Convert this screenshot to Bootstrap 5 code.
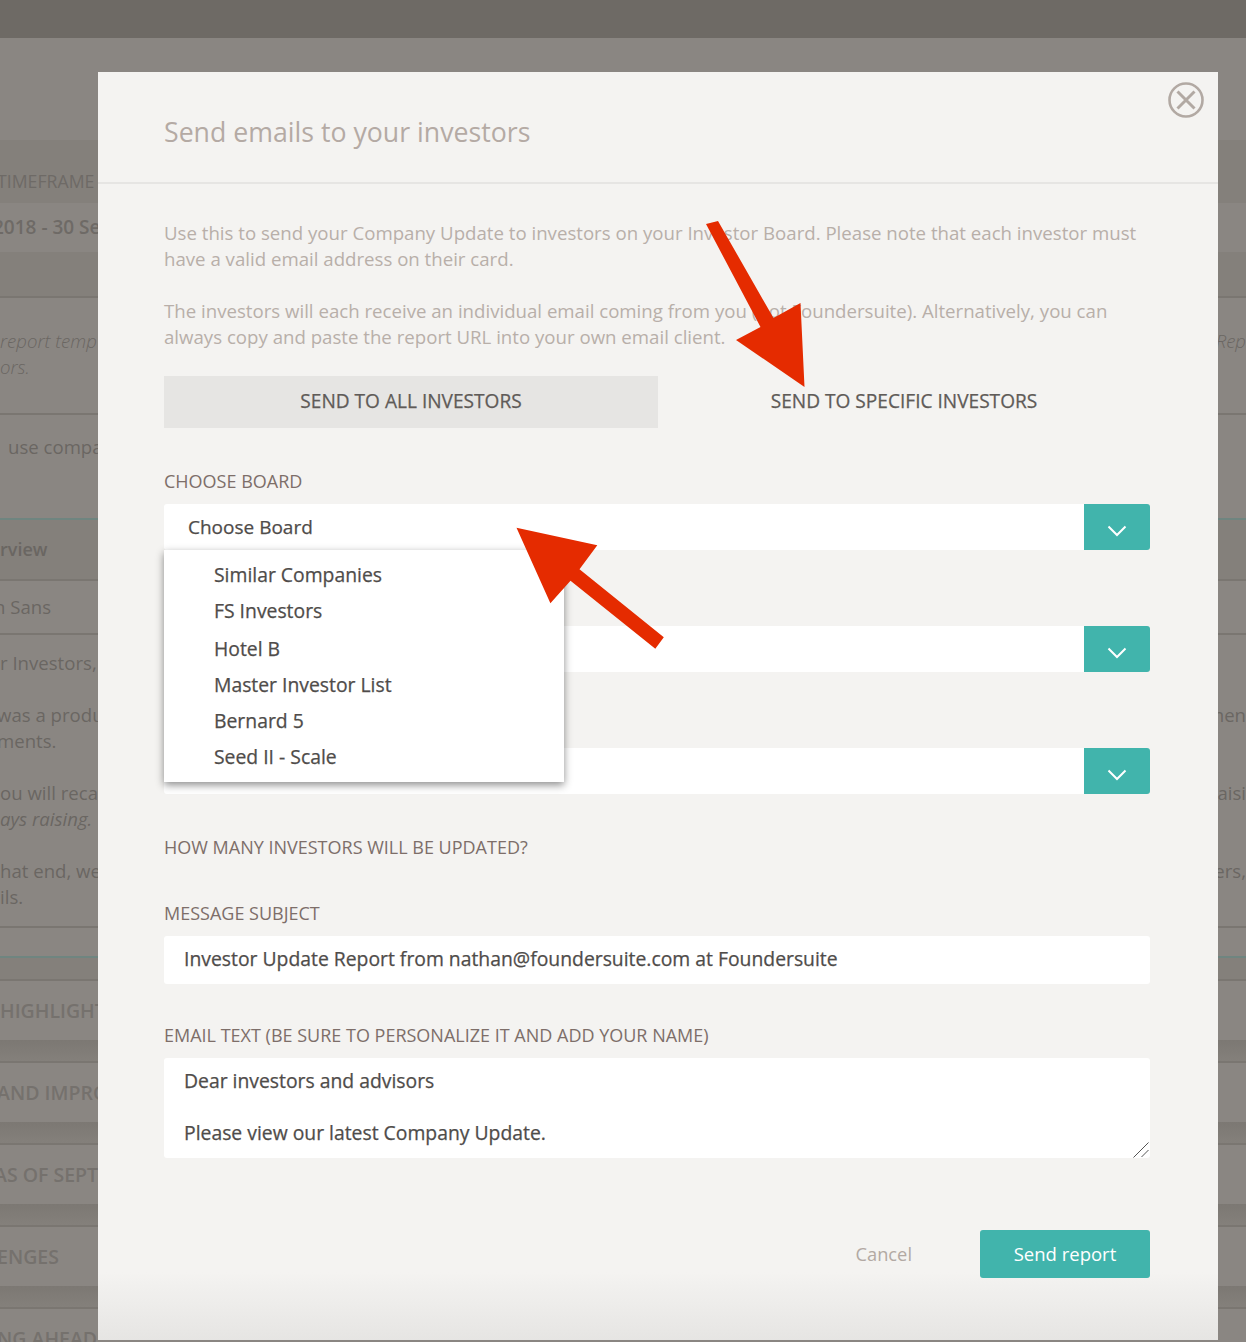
<!DOCTYPE html>
<html>
<head>
  <title>Send emails to your investors</title>
  <link href="https://cdn.jsdelivr.net/npm/bootstrap@5.3.0/dist/css/bootstrap.min.css" rel="stylesheet">
  <style>
    body { background: #8a8682; font-family: "Open Sans", sans-serif; font-size: 18px; overflow: hidden; height: 1342px; position: relative; }
    /* page behind the modal */
    .bg-top { height: 38px; background: #6e6a65; }
    .bg-gap { height: 102px; }
    .bg-row { display: flex; justify-content: space-between; white-space: nowrap; color: #6a6662; font-size: 18.6px; line-height: 26px; overflow: hidden; }
    .bg-band { background: #84807b; }
    .bg-dark { background: linear-gradient(#8a8682 59px, #7c7873 59px, #84807b 80px); }
    .bg-line { border-bottom: 2px solid #7a7671; }
    .bg-teal { border-bottom: 2px solid #6f8580; }
    .h-a { height: 63px; padding-top: 28px; font-size: 17.7px; color: #6e6a66; }
    .h-b { height: 49px; padding-top: 11px; font-size: 19px; font-weight: 600; color: #6e6a66; }
    .h-c { height: 46px; }
    .h-d { height: 117px; padding-top: 30px; font-weight: 300; }
    .h-e { height: 105px; padding-top: 19px; }
    .h-f { height: 61px; padding-top: 16px; font-size: 18px; font-weight: 600; }
    .h-g { height: 54px; padding-top: 13px; }
    .h-h { height: 67px; padding-top: 15px; }
    .h-i { height: 78px; }
    .h-k { height: 70px; }
    .h-l { height: 30px; }
    .h-m { height: 23px; }
    .h-j { height: 82px; padding-top: 17px; font-size: 19.5px; font-weight: 600; color: #75716d; }
    .off-a { margin-left: -3px; }
    .off-b { margin-left: -6px; }
    .off-c { margin-left: -7px; }
    /* modal */
    .sheet { position: absolute; left: 98px; top: 72px; width: 1120px; height: 1268px; background: linear-gradient(#f4f3f1 1200px, #e6e5e3 1268px); border: 0; border-radius: 0; }
    .sheet .modal-header { height: 112px; padding: 10px 68px 0 66px; border-bottom: 2px solid #e6e5e3; border-radius: 0; }
    .sheet .modal-title { font-size: 26.7px; font-weight: 400; color: #b4aaa4; line-height: 36px; }
    .close-x { position: absolute; right: 14px; top: 10px; width: 36px; height: 36px; padding: 0; background: none; border: 0; display: block; }
    .sheet .modal-body { padding: 36px 68px 0 66px; flex: none; }
    .intro { color: #b8afa9; font-size: 18.65px; line-height: 26px; margin-bottom: 26px; }
    .tab-btn { height: 52px; flex: 1 1 0; border: 0; border-radius: 0; font-size: 19.1px; -webkit-text-stroke: .25px; color: #5f5b58; background: none; text-transform: uppercase; padding-top: 4px; }
    .tab-btn.is-on { flex: none; width: 494px; background: #e6e5e3; }
    .fld-label { display: block; color: #7d6e69; font-size: 18px; text-transform: uppercase; line-height: 26px; margin: 0 0 10px; }
    .label-gap { margin-bottom: 40px; }
    .pick-row { height: 46px; background: #fff; border-radius: 3px 0 0 3px; color: #4f4c4a; font-size: 19px; -webkit-text-stroke: .25px; padding-left: 24px; line-height: 46px; }
    .pick-btn { width: 66px; height: 46px; padding-top: 8px; background: #41b4ac; border-radius: 0 3px 3px 0; }
    .pick-gap { margin-bottom: 76px; }
    .pick-last { margin-bottom: 40px; }
    .fld-input { height: 48px; border: 0; border-radius: 3px; padding: 0 20px 3px; font-size: 19.35px; -webkit-text-stroke: .25px; color: #4f4c4a; margin-bottom: 38px; }
    .fld-area { height: 100px; border: 0; border-radius: 3px; padding: 10px 20px; font-size: 19.35px; -webkit-text-stroke: .25px; line-height: 26px; color: #4f4c4a; resize: none; }
    .grip { position: absolute; right: 1px; bottom: 0; }
    .board-menu { position: absolute; left: 66px; top: 478px; width: 400px; height: 232px; border: 0; border-radius: 0; padding: 7px 0 0; margin: 0; display: block; box-shadow: 0 3px 8px rgba(0,0,0,.45); }
    .board-menu .dropdown-item { padding: 0 0 0 50px; font-size: 19.35px; -webkit-text-stroke: .25px; line-height: 36px; color: #4f4c4a; }
    .board-menu .nudge { padding-top: 2px; }
    .sheet .modal-footer { padding: 0 68px 0 66px; border: 0; margin-top: 72px; gap: 68px; justify-content: flex-end; }
    .sheet .modal-footer > * { margin: 0; }
    .link-cancel { color: #b2a9a3; font-size: 18.3px; text-decoration: none; }
    .btn-send { width: 170px; height: 48px; background: #41b4ac; color: #fff; font-size: 18.5px; border: 0; border-radius: 3px; }
    .arrows { position: absolute; left: 0; top: 0; z-index: 1100; pointer-events: none; }
  </style>
</head>
<body>
  <div class="bg-top"></div>
  <div class="bg-gap"></div>
  <div class="bg-band bg-row h-a"><span class="off-a">TIMEFRAME</span></div>
  <div class="bg-row h-b"><span class="off-c">2018 - 30 Sep</span></div>
  <div class="bg-row bg-band h-c bg-line"></div>
  <div class="bg-row h-d bg-line"><div><i>report temp</i><br><i>ors.</i></div><i>Rep</i></div>
  <div class="bg-row h-e bg-teal"><span class="ms-2">use compa</span></div>
  <div class="bg-row bg-band h-f bg-line"><span>rview</span></div>
  <div class="bg-row h-g bg-line"><span class="off-b">n Sans</span></div>
  <div class="bg-row h-h"><span>r Investors,</span></div>
  <div class="bg-row h-i"><div class="off-a">was a produ<br>ments.</div><span>men</span></div>
  <div class="bg-row h-i"><div>ou will reca<br><i>ays raising.</i></div><span>raisi</span></div>
  <div class="bg-row h-k bg-line"><div>hat end, we<br>ils.</div><span>ers,</span></div>
  <div class="bg-row h-l bg-teal"></div>
  <div class="bg-row bg-band h-m bg-line"></div>
  <div class="bg-row bg-dark h-j bg-line"><span>HIGHLIGHT</span></div>
  <div class="bg-row bg-dark h-j bg-line"><span class="off-a">AND IMPRO</span></div>
  <div class="bg-row bg-dark h-j bg-line"><span class="off-b">AS OF SEPT</span></div>
  <div class="bg-row bg-dark h-j bg-line"><span class="off-a">ENGES</span></div>
  <div class="bg-row bg-dark h-j"><span class="off-a">NG AHEAD</span></div>

  <div class="modal-content sheet">
    <div class="modal-header">
      <h5 class="modal-title">Send emails to your investors</h5>
    </div>
    <button class="close-x" type="button" aria-label="Close">
      <svg width="36" height="36" viewBox="0 0 36 36" fill="none" stroke="#b2a9a3"><circle cx="18" cy="18" r="16.5" stroke-width="2.6"/><path d="M9.5 9.5L26.5 26.5M26.5 9.5L9.5 26.5" stroke-width="3"/></svg>
    </button>
    <div class="modal-body">
      <p class="intro">Use this to send your Company Update to investors on your Investor Board. Please note that each investor must have a valid email address on their card.<br><br>The investors will each receive an individual email coming from you (not Foundersuite). Alternatively, you can always copy and paste the report URL into your own email client.</p>
      <div class="d-flex mb-4 pb-3">
        <button class="btn tab-btn is-on" type="button">Send to all investors</button>
        <button class="btn tab-btn" type="button">Send to specific investors</button>
      </div>
      <label class="fld-label">Choose Board</label>
      <div class="d-flex pick-gap">
        <div class="pick-row flex-grow-1">Choose Board</div>
        <div class="pick-btn d-flex align-items-center justify-content-center">
          <svg width="20" height="12" viewBox="0 0 20 12" fill="none" stroke="#fff" stroke-width="2"><path d="M1.5 1.5L10 10L18.5 1.5"/></svg>
        </div>
      </div>
      <div class="d-flex pick-gap">
        <div class="pick-row flex-grow-1"></div>
        <div class="pick-btn d-flex align-items-center justify-content-center">
          <svg width="20" height="12" viewBox="0 0 20 12" fill="none" stroke="#fff" stroke-width="2"><path d="M1.5 1.5L10 10L18.5 1.5"/></svg>
        </div>
      </div>
      <div class="d-flex pick-last">
        <div class="pick-row flex-grow-1"></div>
        <div class="pick-btn d-flex align-items-center justify-content-center">
          <svg width="20" height="12" viewBox="0 0 20 12" fill="none" stroke="#fff" stroke-width="2"><path d="M1.5 1.5L10 10L18.5 1.5"/></svg>
        </div>
      </div>
      <label class="fld-label label-gap">How many investors will be updated?</label>
      <label class="fld-label">Message subject</label>
      <input class="form-control fld-input" type="text" value="Investor Update Report from nathan@foundersuite.com at Foundersuite">
      <label class="fld-label">Email text (be sure to personalize it and add your name)</label>
      <div class="position-relative">
        <textarea class="form-control fld-area">Dear investors and advisors

Please view our latest Company Update.</textarea>
        <svg class="grip" width="16" height="16" viewBox="0 0 16 16" fill="none" stroke="#555"><path d="M0.5 15.5L15.5 0.5M8.5 15L15.5 8"/></svg>
      </div>
    </div>
    <ul class="dropdown-menu board-menu">
      <li><a class="dropdown-item" href="#">Similar Companies</a></li>
      <li><a class="dropdown-item" href="#">FS Investors</a></li>
      <li><a class="dropdown-item nudge" href="#">Hotel B</a></li>
      <li><a class="dropdown-item" href="#">Master Investor List</a></li>
      <li><a class="dropdown-item" href="#">Bernard 5</a></li>
      <li><a class="dropdown-item" href="#">Seed II - Scale</a></li>
    </ul>
    <div class="modal-footer">
      <a class="link-cancel" href="#">Cancel</a>
      <button class="btn btn-send" type="button">Send report</button>
    </div>
  </div>

  <svg class="arrows" width="1246" height="1342" viewBox="0 0 1246 1342" fill="#e52b00">
    <polygon points="706,224 718,221 773.5,318 800.5,303 804.5,387 736,340 760.5,327"/>
    <polygon points="516.5,527.7 597.3,545.3 579.5,569.3 663.8,637.3 655.3,648.7 570.5,580.7 550.4,603.3"/>
  </svg>
</body>
</html>
